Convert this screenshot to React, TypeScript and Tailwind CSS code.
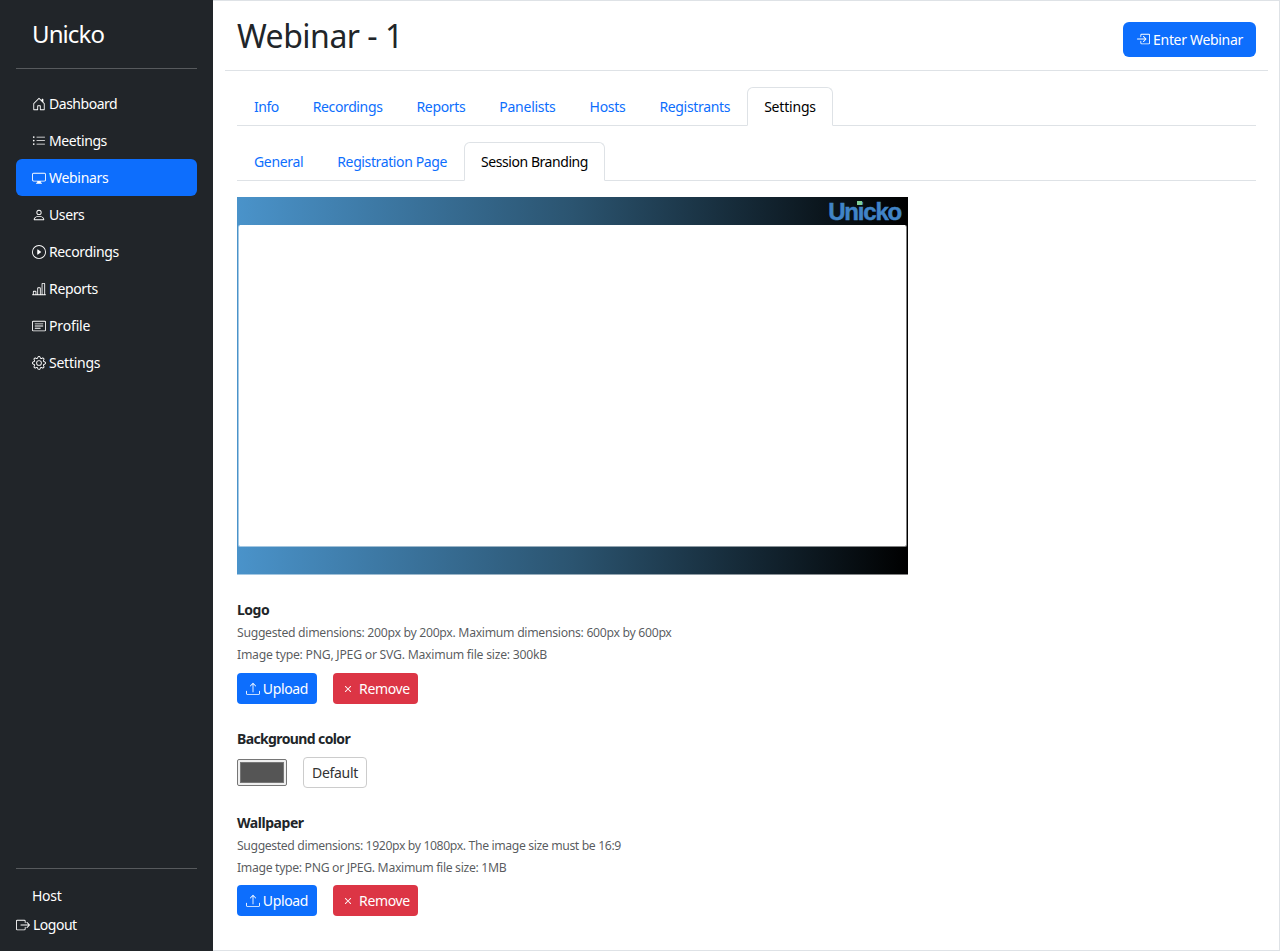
import { useState } from 'react';
import type { ReactNode } from 'react';
import type { IconType } from 'react-icons';
import {
  BsBarChartLine,
  BsBoxArrowInRight,
  BsBoxArrowRight,
  BsCardText,
  BsDisplay,
  BsGear,
  BsHouseDoor,
  BsListUl,
  BsPerson,
  BsPlayCircle,
  BsUpload,
  BsX,
} from 'react-icons/bs';

const menu: { label: string; icon: IconType; tracking: string }[] = [
  { label: 'Dashboard', icon: BsHouseDoor, tracking: 'tracking-[-0.47px]' },
  { label: 'Meetings', icon: BsListUl, tracking: 'tracking-[-0.4px]' },
  { label: 'Webinars', icon: BsDisplay, tracking: 'tracking-[-0.3px]' },
  { label: 'Users', icon: BsPerson, tracking: 'tracking-[-0.4px]' },
  { label: 'Recordings', icon: BsPlayCircle, tracking: 'tracking-[-0.37px]' },
  { label: 'Reports', icon: BsBarChartLine, tracking: 'tracking-[-0.33px]' },
  { label: 'Profile', icon: BsCardText, tracking: 'tracking-[-0.15px]' },
  { label: 'Settings', icon: BsGear, tracking: 'tracking-[-0.25px]' },
];

interface Tab {
  label: string;
  tracking: string;
}

const mainTabs: Tab[] = [
  { label: 'Info', tracking: 'tracking-[-0.5px]' },
  { label: 'Recordings', tracking: 'tracking-[-0.37px]' },
  { label: 'Reports', tracking: 'tracking-[-0.35px]' },
  { label: 'Panelists', tracking: 'tracking-[-0.25px]' },
  { label: 'Hosts', tracking: 'tracking-[-0.3px]' },
  { label: 'Registrants', tracking: 'tracking-[-0.33px]' },
  { label: 'Settings', tracking: 'tracking-[-0.2px]' },
];

const settingsTabs: Tab[] = [
  { label: 'General', tracking: 'tracking-[-0.33px]' },
  { label: 'Registration Page', tracking: 'tracking-[-0.38px]' },
  { label: 'Session Branding', tracking: 'tracking-[-0.44px]' },
];

function Sidebar() {
  return (
    <aside className="flex w-[213px] shrink-0 flex-col bg-[#212529] px-4 text-white">
      <div className="flex h-[68px] items-center px-4 text-2xl tracking-[-0.9px]">Unicko</div>
      <div className="h-px bg-[#575a5d]" />
      <nav className="mt-4 flex flex-col">
        {menu.map(({ label, icon: Icon, tracking }) => (
          <a
            key={label}
            href="#"
            className={`flex h-[37px] items-center gap-[3px] rounded-md px-4 ${tracking} ${
              label === 'Webinars' ? 'bg-[#0d6efd]' : ''
            }`}
          >
            <Icon className="size-3.5" />
            <span>{label}</span>
          </a>
        ))}
      </nav>
      <div className="mt-auto h-px bg-[#575a5d]" />
      <div className="mt-4 px-4 leading-[21px] tracking-[-0.3px]">Host</div>
      <a href="#" className="mt-2 mb-4 flex items-center gap-[3px] leading-[21px] tracking-[-0.5px]">
        <BsBoxArrowRight className="size-3.5" />
        <span>Logout</span>
      </a>
    </aside>
  );
}

function Tabs({ items, active, onChange }: { items: Tab[]; active: string; onChange: (t: string) => void }) {
  return (
    <div className="mt-4 flex h-[39px] border-b border-[#dee2e6]">
      {items.map(({ label, tracking }) => (
        <button
          key={label}
          onClick={() => onChange(label)}
          className={`h-[39px] rounded-t-md border px-4 ${tracking} ${
            label === active
              ? 'border-[#dee2e6] border-b-white bg-white text-black'
              : 'border-transparent text-[#0d6efd]'
          }`}
        >
          {label}
        </button>
      ))}
    </div>
  );
}

function Preview() {
  return (
    <div className="mt-4 flex h-[378px] w-[671px] flex-col bg-linear-to-r/srgb from-[#4a93ca] via-[#2b5470] to-black">
      <div className="flex h-7 items-center justify-end pr-[7px]">
        <span className="relative mt-px font-['Liberation_Sans',sans-serif] text-2xl leading-none font-bold tracking-[-1.2px] text-[#4184c7] [-webkit-text-stroke:0.5px_#4184c7]">
          Unicko
          <span className="absolute top-px left-[29px] h-[4px] w-[5px] bg-[#7fcf98]" />
        </span>
      </div>
      <div className="mx-px h-[322px] rounded-xs border-x border-b border-white/50 bg-white bg-clip-padding" />
      <div className="mt-auto h-px bg-white/50" />
    </div>
  );
}

function FileButtons() {
  return (
    <div className="flex gap-4 tracking-[-0.35px] text-white">
      <button className="flex h-[31px] w-20 items-center justify-center gap-[3px] rounded bg-[#0d6efd]">
        <BsUpload className="size-3.5" />
        <span className="pt-px">Upload</span>
      </button>
      <button className="flex h-[31px] w-[85px] items-center justify-center gap-1 rounded bg-[#dc3545]">
        <BsX className="size-3.5" />
        <span className="pt-px">Remove</span>
      </button>
    </div>
  );
}

function Field({
  title,
  tracking,
  lines,
  children,
}: {
  title: string;
  tracking: string;
  lines?: Tab[];
  children: ReactNode;
}) {
  return (
    <section>
      <h2 className={`mb-0.5 leading-[21px] font-bold ${tracking}`}>{title}</h2>
      {lines?.map((line) => (
        <p key={line.label} className={`text-[12.25px] leading-[22px] text-[#212529]/75 ${line.tracking}`}>
          {line.label}
        </p>
      ))}
      {children}
    </section>
  );
}

export default function App() {
  const [tab, setTab] = useState('Settings');
  const [subTab, setSubTab] = useState('Session Branding');

  return (
    <div className="flex h-[951px] w-[1280px] overflow-hidden bg-white font-['Noto_Sans',sans-serif] text-sm text-[#212529]">
      <Sidebar />
      <main className="flex flex-1 flex-col border-y border-r border-[#dee2e6] pr-[11px] pl-3">
        <header className="flex h-[70px] shrink-0 items-center justify-between border-b border-[#dee2e6] px-3">
          <h1 className="text-[32px] leading-none tracking-[-0.5px]">Webinar - 1</h1>
          <button className="mt-[7px] flex h-[35px] w-[133px] items-center justify-center gap-[3px] rounded-md bg-[#0d6efd] tracking-[-0.32px] text-white">
            <BsBoxArrowInRight className="size-3.5" />
            <span className="pt-px">Enter Webinar</span>
          </button>
        </header>
        <div className="flex flex-col px-3">
          <Tabs items={mainTabs} active={tab} onChange={setTab} />
          <Tabs items={settingsTabs} active={subTab} onChange={setSubTab} />
          <Preview />
          <div className="mt-6 flex flex-col gap-6">
            <Field
              title="Logo"
              tracking="tracking-[-0.5px]"
              lines={[
                {
                  label: 'Suggested dimensions: 200px by 200px. Maximum dimensions: 600px by 600px',
                  tracking: 'tracking-[-0.31px]',
                },
                {
                  label: 'Image type: PNG, JPEG or SVG. Maximum file size: 300kB',
                  tracking: 'tracking-[-0.26px]',
                },
              ]}
            >
              <div className="mt-[7px]">
                <FileButtons />
              </div>
            </Field>
            <Field title="Background color" tracking="tracking-[-0.62px]">
              <div className="mt-2 flex items-center gap-4">
                <div className="h-[27px] w-[50px] rounded-xs border border-[#767676] bg-[#efefef] p-[2px]">
                  <div className="h-full border border-[#777777] bg-[#555555]" />
                </div>
                <button className="h-[31px] w-16 rounded border border-[#cccccc] pt-px tracking-[-0.3px] text-[#333333]">
                  Default
                </button>
              </div>
            </Field>
            <Field
              title="Wallpaper"
              tracking="tracking-[-0.45px]"
              lines={[
                {
                  label: 'Suggested dimensions: 1920px by 1080px. The image size must be 16:9',
                  tracking: 'tracking-[-0.39px]',
                },
                {
                  label: 'Image type: PNG or JPEG. Maximum file size: 1MB',
                  tracking: 'tracking-[-0.34px]',
                },
              ]}
            >
              <div className="mt-[6px]">
                <FileButtons />
              </div>
            </Field>
          </div>
        </div>
      </main>
    </div>
  );
}
